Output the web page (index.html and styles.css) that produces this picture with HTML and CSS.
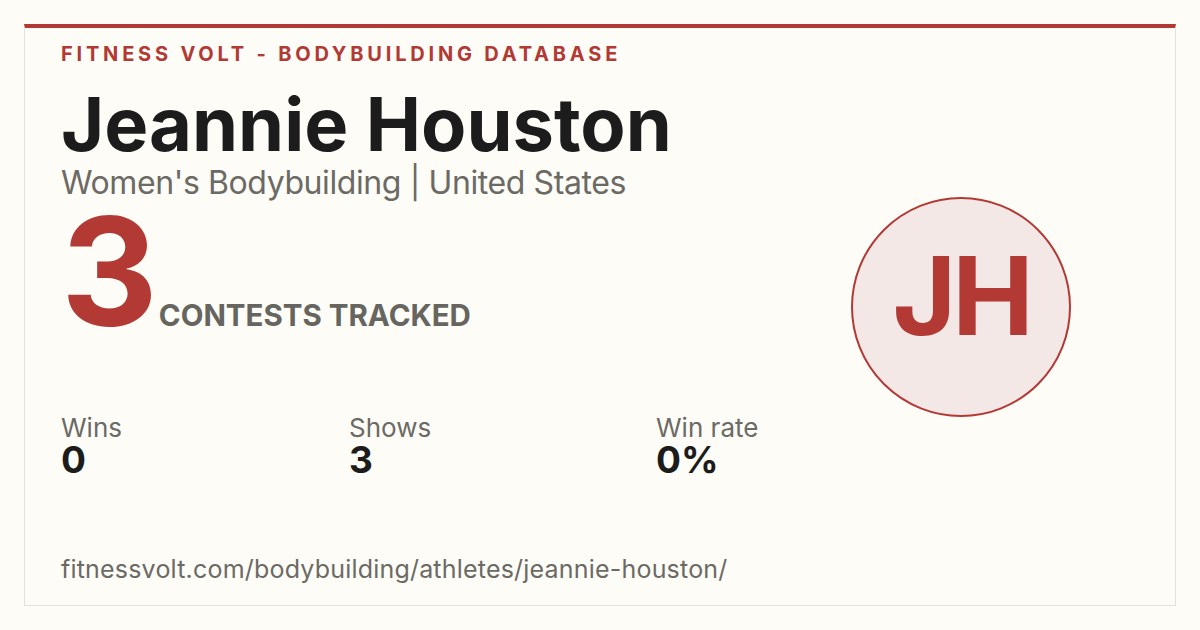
FILE: index.html
```html
<!DOCTYPE html>
<html lang="en">
<head>
<meta charset="utf-8">
<title>Jeannie Houston - Fitness Volt</title>
<link rel="stylesheet" href="styles.css">
</head>
<body>
<main class="card">
  <div class="top">
    <div class="info">
      <div class="eyebrow">FITNESS VOLT - BODYBUILDING DATABASE</div>
      <h1 class="name">Jeannie Houston</h1>
      <div class="sub">Women's Bodybuilding | United States</div>
      <div class="count">
        <span class="count-num">3</span>
        <span class="count-label">CONTESTS TRACKED</span>
      </div>
      <div class="stats">
        <div class="stat">
          <div class="stat-label">Wins</div>
          <div class="stat-value">0</div>
        </div>
        <div class="stat">
          <div class="stat-label">Shows</div>
          <div class="stat-value">3</div>
        </div>
        <div class="stat">
          <div class="stat-label">Win rate</div>
          <div class="stat-value">0%</div>
        </div>
      </div>
    </div>
    <div class="avatar">JH</div>
  </div>
  <div class="url">fitnessvolt.com/bodybuilding/athletes/jeannie-houston/</div>
</main>
</body>
</html>
```
FILE: styles.css
```css
html, body {
  margin: 0;
  padding: 0;
  background: #fdfcf7;
}
body {
  width: 1200px;
  height: 630px;
  padding: 24px;
  box-sizing: border-box;
  font-family: Inter, "Noto Sans", sans-serif;
}
.card {
  box-sizing: border-box;
  width: 1152px;
  height: 582px;
  border: 1px solid #e4e2dc;
  border-top: 4px solid #b23934;
  padding: 14px 36px 0 36px;
  display: flex;
  flex-direction: column;
}
.top {
  display: flex;
  justify-content: space-between;
  align-items: flex-start;
}
.info {
  display: flex;
  flex-direction: column;
}
.eyebrow {
  color: #b23934;
  font-size: 20px;
  line-height: 24px;
  font-weight: 700;
  letter-spacing: 3.8px;
}
.name {
  margin: 17px 0 0 0;
  font-size: 74px;
  line-height: 82px;
  font-weight: 700;
  color: #1c1c1c;
  letter-spacing: 0;
}
.sub {
  font-size: 32px;
  line-height: 36px;
  color: #6b6a65;
  letter-spacing: -0.4px;
}
.count {
  display: flex;
  align-items: baseline;
  gap: 3px;
  margin-top: 11px;
}
.count-num {
  font-size: 150px;
  line-height: 120px;
  font-weight: 700;
  color: #b23934;
  letter-spacing: -2px;
}
.count-label {
  font-size: 29.5px;
  font-weight: 700;
  color: #66655f;
  letter-spacing: 0;
}
.avatar {
  width: 220px;
  height: 220px;
  box-sizing: border-box;
  border-radius: 50%;
  border: 2px solid #b23934;
  background: #f4e8e7;
  color: #b23934;
  font-size: 109px;
  line-height: 120px;
  font-weight: 700;
  display: flex;
  align-items: center;
  justify-content: center;
  padding-bottom: 24px;
  margin: 155px 68px 0 0;
  letter-spacing: -4px;
}
.stats {
  display: grid;
  grid-template-columns: 288px 307px auto;
  margin-top: 81px;
}
.stat-label {
  font-size: 26px;
  line-height: 28px;
  color: #6b6a65;
}
.stat-value {
  font-size: 37px;
  line-height: 36px;
  font-weight: 700;
  color: #1c1c1c;
}
.url {
  margin-top: auto;
  margin-bottom: 21px;
  font-size: 25px;
  line-height: 30px;
  color: #6b6a65;
  letter-spacing: 0.2px;
}
```
